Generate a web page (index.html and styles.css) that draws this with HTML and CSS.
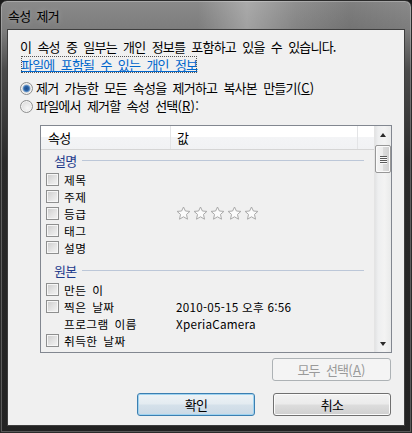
FILE: index.html
```html
<!DOCTYPE html>
<html lang="ko">
<head>
<meta charset="utf-8">
<title>속성 제거</title>
<link rel="stylesheet" href="styles.css">
</head>
<body>
<div class="window">
  <div class="titlebar"><span class="title">속성 제거</span></div>
  <div class="client">
    <p class="intro">이 속성 중 일부는 개인 정보를 포함하고 있을 수 있습니다.</p>
    <p class="linkline"><a class="link">파일에 포함될 수 있는 개인 정보</a></p>
    <div class="options">
      <div class="opt"><span class="radio on"></span><span>제거 가능한 모든 속성을 제거하고 복사본 만들기<span class="lat">(<u>C</u>)</span></span></div>
      <div class="opt"><span class="radio"></span><span>파일에서 제거할 속성 선택<span class="lat">(<u>R</u>):</span></span></div>
    </div>
    <div class="list">
      <div class="list-main">
        <div class="list-head">
          <div class="hcol hcol-name">속성</div>
          <div class="hcol hcol-val">값</div>
          <div class="hcol hcol-rest"></div>
        </div>
        <div class="list-body">
          <div class="group first"><span class="group-label">설명</span><span class="group-line"></span></div>
          <div class="row"><span class="check"></span><span class="name">제목</span><span class="val"></span></div>
          <div class="row"><span class="check"></span><span class="name">주제</span><span class="val"></span></div>
          <div class="row"><span class="check"></span><span class="name">등급</span><span class="val">
            <svg class="stars" width="86" height="15" viewBox="0 0 86 15">
              <g fill="#fbfbfb" stroke="#a9a9a9" stroke-width="1" stroke-linejoin="round">
                <polygon points="7.5,1 9.4,5 13.9,5.4 10.5,8.4 11.5,13.2 7.5,10.8 3.5,13.2 4.5,8.4 1.1,5.4 5.6,5"/>
                <polygon transform="translate(17 0)" points="7.5,1 9.4,5 13.9,5.4 10.5,8.4 11.5,13.2 7.5,10.8 3.5,13.2 4.5,8.4 1.1,5.4 5.6,5"/>
                <polygon transform="translate(34 0)" points="7.5,1 9.4,5 13.9,5.4 10.5,8.4 11.5,13.2 7.5,10.8 3.5,13.2 4.5,8.4 1.1,5.4 5.6,5"/>
                <polygon transform="translate(51 0)" points="7.5,1 9.4,5 13.9,5.4 10.5,8.4 11.5,13.2 7.5,10.8 3.5,13.2 4.5,8.4 1.1,5.4 5.6,5"/>
                <polygon transform="translate(68 0)" points="7.5,1 9.4,5 13.9,5.4 10.5,8.4 11.5,13.2 7.5,10.8 3.5,13.2 4.5,8.4 1.1,5.4 5.6,5"/>
              </g>
            </svg></span></div>
          <div class="row"><span class="check"></span><span class="name">태그</span><span class="val"></span></div>
          <div class="row"><span class="check"></span><span class="name">설명</span><span class="val"></span></div>
          <div class="group"><span class="group-label">원본</span><span class="group-line"></span></div>
          <div class="row"><span class="check"></span><span class="name">만든 이</span><span class="val"></span></div>
          <div class="row"><span class="check"></span><span class="name">찍은 날짜</span><span class="val">2010-05-15 오후 6:56</span></div>
          <div class="row"><span class="nocheck"></span><span class="name">프로그램 이름</span><span class="val">XperiaCamera</span></div>
          <div class="row"><span class="check"></span><span class="name">취득한 날짜</span><span class="val"></span></div>
        </div>
      </div>
      <div class="scrollbar">
        <div class="sb-btn"><span class="arrow up"></span></div>
        <div class="sb-thumb"><span class="grip"></span><span class="grip"></span><span class="grip"></span><span class="grip"></span></div>
        <div class="sb-space"></div>
        <div class="sb-btn"><span class="arrow down"></span></div>
      </div>
    </div>
    <div class="selall-row"><button class="btn disabled">모두 선택<span class="lat">(<u>A</u>)</span></button></div>
    <div class="actions">
      <button class="btn default">확인</button>
      <button class="btn">취소</button>
    </div>
  </div>
</div>
</body>
</html>
```
FILE: styles.css
```css
* { box-sizing: border-box; margin: 0; padding: 0; }
html, body { width: 412px; height: 433px; overflow: hidden; background: #1a1a1a; }
body {
  font-family: "Noto Sans CJK KR", "Noto Sans", sans-serif;
  font-size: 13px;
  line-height: 17px;
  letter-spacing: -0.8px;
  word-spacing: 3.4px;
  color: #000;
}
.lat { letter-spacing: 0.2px; }
.window {
  width: 412px;
  height: 433px;
  border: 1px solid #2b2b2b;
  border-radius: 7px 7px 0 0;
  padding: 0 7px 7px 7px;
  display: flex;
  flex-direction: column;
  background:
    linear-gradient(to right, rgba(255,255,255,0) 0%, rgba(255,255,255,0) 48%, rgba(255,255,255,0.28) 60%, rgba(255,255,255,0.05) 72%, rgba(0,0,0,0.08) 85%, rgba(0,0,0,0) 100%) top / 100% 30px no-repeat,
    linear-gradient(to bottom, #8a8a8a 0px, #7c7c7c 30px, #4a4a4a 70px, #2a2a2a 160px, #222 100%);
  box-shadow: inset 0 0 0 1px rgba(255,255,255,0.25);
}
.titlebar {
  height: 29px;
  line-height: 29px;
  color: #000;
  text-shadow: 0 0 6px rgba(255,255,255,0.35);
}
.client {
  height: 395px;
  background: #f0f0f0;
  box-shadow: 0 0 0 1px #3e3e3e;
  display: flex;
  flex-direction: column;
}
.intro {
  padding: 7px 0 0 12px;
  line-height: 19px;
}
.linkline {
  padding-left: 12px;
  height: 18px;
  line-height: 18px;
}
.link {
  color: #0066cc;
  text-decoration: underline;
  outline: 1px dotted #555;
  outline-offset: -2px;
  padding: 0 1px;
  cursor: pointer;
}
.options {
  margin-top: 5px;
  padding-left: 12px;
}
.opt {
  display: flex;
  align-items: center;
  height: 18px;
  line-height: 18px;
}
.radio {
  width: 13px;
  height: 13px;
  border-radius: 50%;
  border: 1px solid #8e8f8f;
  background: radial-gradient(circle at 60% 65%, #f6f6f6 0, #e2e2e2 60%, #cfcfcf 100%);
  box-shadow: inset 0 0 0 1px #f4f4f4;
  margin-right: 3px;
  flex: none;
}
.radio.on {
  background: radial-gradient(circle at 50% 50%, #1e4d8c 0, #2c63a5 2.2px, #6d9ccf 3.4px, #dcdcdc 4.2px, #eaeaea 100%);
}
u { text-decoration: underline; }

.list {
  margin: 10px 12px 0 32px;
  height: 228px;
  border: 1px solid #828790;
  display: flex;
  background: #f0f0f0;
}
.list-main {
  flex: 1;
  display: flex;
  flex-direction: column;
  min-width: 0;
}
.list-head {
  height: 24px;
  display: flex;
  border-bottom: 1px solid #d5d5d5;
  background: linear-gradient(to bottom, #ffffff 0%, #ffffff 50%, #f3f4f6 50%, #f1f2f4 100%);
}
.hcol {
  line-height: 23px;
  border-right: 1px solid #e3e4e6;
}
.hcol-name { width: 130px; padding-left: 7px; }
.hcol-val { width: 187px; padding-left: 6px; }
.hcol-rest { flex: 1; border-right: none; }

.list-body { display: flex; flex-direction: column; }
.group {
  height: 17px;
  display: flex;
  align-items: center;
  margin: 6px 10px 2px 13px;
}
.group.first { margin-top: 2px; }
.group-label { color: #1e3a8c; }
.group-line {
  flex: 1;
  height: 1px;
  background: #bcc7d8;
  margin-left: 6px;
}
.row {
  height: 17px;
  display: flex;
  align-items: center;
  padding-left: 5px;
  font-size: 11.7px;
  letter-spacing: 0.4px;
  word-spacing: 2.2px;
}
.check {
  width: 13px;
  height: 13px;
  border: 1px solid #8e8f8f;
  background: linear-gradient(135deg, #cbcbcb 0%, #e4e4e4 55%, #f4f4f4 100%);
  box-shadow: inset 0 0 0 1px #f6f6f6;
  margin-right: 5px;
  flex: none;
}
.nocheck { width: 18px; flex: none; }
.name { width: 112px; flex: none; white-space: nowrap; }
.val {
  white-space: nowrap;
  letter-spacing: 0.25px;
  word-spacing: 0;
  display: flex;
  align-items: center;
}
.stars { display: block; }

.scrollbar {
  width: 17px;
  display: flex;
  flex-direction: column;
  background: linear-gradient(to right, #e2e3e4 0%, #eeeff0 20%, #f3f3f3 60%, #e9eaea 100%);
  border-left: 1px solid #e4e4e4;
}
.sb-btn {
  height: 17px;
  display: flex;
  align-items: center;
  justify-content: center;
}
.arrow { width: 0; height: 0; border-left: 3.5px solid transparent; border-right: 3.5px solid transparent; }
.arrow.up { border-bottom: 4px solid #2a2a2a; }
.arrow.down { border-top: 4px solid #2a2a2a; }
.sb-thumb {
  margin-top: 2px;
  height: 28px;
  border: 1px solid #979797;
  border-radius: 2px;
  background: linear-gradient(to right, #f4f4f4 0%, #ececec 50%, #dcdcdc 51%, #cfcfcf 100%);
  box-shadow: inset 0 0 0 1px #fafafa;
  display: flex;
  flex-direction: column;
  align-items: center;
  justify-content: center;
  gap: 1px;
}
.grip { width: 7px; height: 1px; background: #5a5a5a; box-shadow: 0 1px 0 #fafafa; }
.sb-space { flex: 1; }

.selall-row {
  display: flex;
  justify-content: flex-end;
  margin-top: 5px;
  padding-right: 13px;
}
.actions {
  display: flex;
  justify-content: flex-end;
  gap: 18px;
  margin-top: 12px;
  padding-right: 13px;
}
.btn {
  width: 118px;
  height: 23px;
  font-family: inherit;
  font-size: 13px;
  line-height: 19px;
  letter-spacing: -0.8px;
  word-spacing: 3.4px;
  color: #000;
  border: 1px solid #707070;
  border-radius: 3px;
  background: linear-gradient(to bottom, #f2f2f2 0%, #ebebeb 48%, #dddddd 52%, #cfcfcf 100%);
  box-shadow: inset 0 0 0 1px #fbfbfb;
}
.selall-row .btn { width: 119px; }
.btn.default {
  border-color: #3c7fb1;
  background: linear-gradient(to bottom, #eef3f6 0%, #e3ebf1 48%, #d5e1ea 52%, #cbd9e5 100%);
  box-shadow: inset 0 0 0 1px #9fd3f0;
}
.btn.disabled {
  border-color: #adb2b5;
  background: #f4f4f4;
  color: #9a9a9a;
  box-shadow: none;
}
```
